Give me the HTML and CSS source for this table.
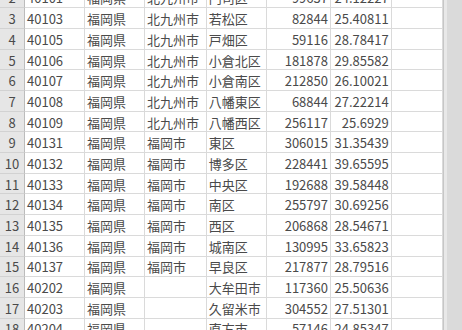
FILE: index.html
```html
<!DOCTYPE html>
<html lang="ja">
<head>
<meta charset="utf-8">
<link rel="stylesheet" href="styles.css">
</head>
<body>
<div class="window">
  <div class="sheet">
    <div class="rh">2</div><div class="c">40101</div><div class="c">福岡県</div><div class="c">北九州市</div><div class="c">門司区</div><div class="c n">99637</div><div class="c n">24.12227</div><div class="c"></div>
    <div class="rh">3</div><div class="c">40103</div><div class="c">福岡県</div><div class="c">北九州市</div><div class="c">若松区</div><div class="c n">82844</div><div class="c n">25.40811</div><div class="c"></div>
    <div class="rh">4</div><div class="c">40105</div><div class="c">福岡県</div><div class="c">北九州市</div><div class="c">戸畑区</div><div class="c n">59116</div><div class="c n">28.78417</div><div class="c"></div>
    <div class="rh">5</div><div class="c">40106</div><div class="c">福岡県</div><div class="c">北九州市</div><div class="c">小倉北区</div><div class="c n">181878</div><div class="c n">29.85582</div><div class="c"></div>
    <div class="rh">6</div><div class="c">40107</div><div class="c">福岡県</div><div class="c">北九州市</div><div class="c">小倉南区</div><div class="c n">212850</div><div class="c n">26.10021</div><div class="c"></div>
    <div class="rh">7</div><div class="c">40108</div><div class="c">福岡県</div><div class="c">北九州市</div><div class="c">八幡東区</div><div class="c n">68844</div><div class="c n">27.22214</div><div class="c"></div>
    <div class="rh">8</div><div class="c">40109</div><div class="c">福岡県</div><div class="c">北九州市</div><div class="c">八幡西区</div><div class="c n">256117</div><div class="c n">25.6929</div><div class="c"></div>
    <div class="rh">9</div><div class="c">40131</div><div class="c">福岡県</div><div class="c">福岡市</div><div class="c">東区</div><div class="c n">306015</div><div class="c n">31.35439</div><div class="c"></div>
    <div class="rh">10</div><div class="c">40132</div><div class="c">福岡県</div><div class="c">福岡市</div><div class="c">博多区</div><div class="c n">228441</div><div class="c n">39.65595</div><div class="c"></div>
    <div class="rh">11</div><div class="c">40133</div><div class="c">福岡県</div><div class="c">福岡市</div><div class="c">中央区</div><div class="c n">192688</div><div class="c n">39.58448</div><div class="c"></div>
    <div class="rh">12</div><div class="c">40134</div><div class="c">福岡県</div><div class="c">福岡市</div><div class="c">南区</div><div class="c n">255797</div><div class="c n">30.69256</div><div class="c"></div>
    <div class="rh">13</div><div class="c">40135</div><div class="c">福岡県</div><div class="c">福岡市</div><div class="c">西区</div><div class="c n">206868</div><div class="c n">28.54671</div><div class="c"></div>
    <div class="rh">14</div><div class="c">40136</div><div class="c">福岡県</div><div class="c">福岡市</div><div class="c">城南区</div><div class="c n">130995</div><div class="c n">33.65823</div><div class="c"></div>
    <div class="rh">15</div><div class="c">40137</div><div class="c">福岡県</div><div class="c">福岡市</div><div class="c">早良区</div><div class="c n">217877</div><div class="c n">28.79516</div><div class="c"></div>
    <div class="rh">16</div><div class="c">40202</div><div class="c">福岡県</div><div class="c"></div><div class="c">大牟田市</div><div class="c n">117360</div><div class="c n">25.50636</div><div class="c"></div>
    <div class="rh">17</div><div class="c">40203</div><div class="c">福岡県</div><div class="c"></div><div class="c">久留米市</div><div class="c n">304552</div><div class="c n">27.51301</div><div class="c"></div>
    <div class="rh">18</div><div class="c">40204</div><div class="c">福岡県</div><div class="c"></div><div class="c">直方市</div><div class="c n">57146</div><div class="c n">24.85347</div><div class="c"></div>
  </div>
  <div class="scrollbar"><div class="thumb"></div></div>
</div>
</body>
</html>
```

FILE: styles.css
```css
html, body {
  margin: 0;
  padding: 0;
  background: #ffffff;
  overflow: hidden;
}

.window {
  display: flex;
  width: 462px;
  height: 330px;
  overflow: hidden;
}

.sheet {
  display: grid;
  grid-template-columns: 25px 60px 60px 61.7px 60px 64.3px 60.7px 51.3px;
  grid-auto-rows: 20.7px;
  margin-top: -12.4px;
  font-family: "Noto Sans CJK JP", "Noto Sans", sans-serif;
  font-size: 13px;
  color: #4a4a4a;
  flex: none;
}

.rh {
  background: #e6e6e6;
  color: #4a4a4a;
  border-right: 1px solid #bcbcbc;
  border-bottom: 1px solid #d2d2d2;
  display: flex;
  align-items: center;
  justify-content: center;
  box-sizing: border-box;
  padding-top: 1px;
}

.c {
  border-right: 1px solid #dadada;
  border-bottom: 1px solid #dadada;
  box-sizing: border-box;
  display: flex;
  align-items: center;
  padding: 1px 2px 0 2px;
  white-space: nowrap;
  overflow: hidden;
}

.n {
  justify-content: flex-end;
}

.scrollbar {
  flex: 1;
  background: #dadada;
  border-left: 1px solid #c6c6c6;
  display: flex;
}

.thumb {
  width: 3px;
  background: #e8e8e8;
}
```
